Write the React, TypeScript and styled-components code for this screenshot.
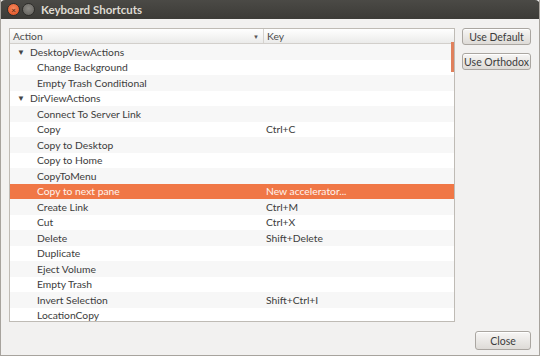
import React from "react";
import styled, { createGlobalStyle } from "styled-components";

const Global = createGlobalStyle`
  html, body { margin: 0; padding: 0; background: #f2f1f0; }
  body { font-family: Lato, "Open Sans", sans-serif; }
`;

const Window = styled.div`
  width: 540px;
  height: 356px;
  box-sizing: border-box;
  display: flex;
  flex-direction: column;
  background: #f2f1f0;
  border-left: 1px solid #a7a39d;
  border-right: 1px solid #a7a39d;
  border-bottom: 1px solid #a7a39d;
  overflow: hidden;
`;

const TitleBar = styled.div`
  height: 19px;
  flex: none;
  display: flex;
  align-items: center;
  padding-left: 7px;
  gap: 2px;
  background: linear-gradient(#4b4a46, #3c3b37);
  border-radius: 5px 5px 0 0;
  margin: 0 -1px;
`;

const WinBtn = styled.div<{ $close?: boolean }>`
  width: 11px;
  height: 11px;
  border-radius: 50%;
  background: ${(p) =>
    p.$close
      ? "radial-gradient(circle at 50% 40%, #f58a5f, #de4a1c)"
      : "radial-gradient(circle at 50% 40%, #8c8a85, #5e5c57)"};
  border: 1px solid #2e2d2a;
  display: flex;
  align-items: center;
  justify-content: center;
  font-size: 8px;
  line-height: 1;
  color: #3a1a0a;
`;

const Title = styled.div`
  margin-left: 4px;
  color: #dfdbd2;
  font-weight: bold;
  font-size: 11.5px;
  font-family: Lato, sans-serif;
`;

const Body = styled.div`
  flex: 1;
  display: flex;
  flex-direction: column;
  padding: 9px 8px 6px 8px;
  min-height: 0;
`;

const Main = styled.div`
  display: flex;
  gap: 7px;
`;

const Tree = styled.div`
  position: relative;
  width: 446px;
  height: 294px;
  box-sizing: border-box;
  border: 1px solid #bfbbb5;
  background: #fff;
  overflow: hidden;
  font-size: 10.3px;
  color: #3c3c3c;
`;

const Header = styled.div`
  display: grid;
  grid-template-columns: 253px 1fr;
  height: 14px;
  background: linear-gradient(#ffffff, #ebebea);
  border-bottom: 1px solid #d2cfcb;
`;

const HeadCell = styled.div<{ $sep?: boolean }>`
  display: flex;
  align-items: center;
  justify-content: space-between;
  padding: 0 4px 0 3px;
  border-left: ${(p) => (p.$sep ? "1px solid #d6d3cf" : "none")};
  color: #4c4c4c;
`;

const Arrow = styled.span`
  font-size: 6px;
  color: #555;
`;

const Row = styled.div<{ $alt?: boolean; $sel?: boolean }>`
  display: grid;
  grid-template-columns: 256px 1fr;
  height: 15.5px;
  align-items: center;
  background: ${(p) => (p.$sel ? "#f07746" : p.$alt ? "#f7f7f7" : "#ffffff")};
  color: ${(p) => (p.$sel ? "#fff4ee" : "#3c3c3c")};
`;

const NameCell = styled.div<{ $level: number }>`
  display: flex;
  align-items: center;
  padding-left: ${(p) => (p.$level === 0 ? 7 : 27)}px;
  white-space: nowrap;
`;

const Expander = styled.span`
  font-size: 8px;
  width: 13px;
  color: #444;
`;

const KeyCell = styled.div`
  white-space: nowrap;
`;

const ScrollThumb = styled.div`
  position: absolute;
  right: 0;
  top: 13px;
  width: 3px;
  height: 30px;
  background: #e0805c;
`;

const Side = styled.div`
  display: flex;
  flex-direction: column;
  gap: 8px;
`;

const Button = styled.button`
  width: 69px;
  height: 17px;
  box-sizing: border-box;
  padding: 0;
  white-space: nowrap;
  font-family: Lato, sans-serif;
  font-size: 10.5px;
  color: #3c3c3c;
  background: linear-gradient(#f7f6f5, #dedbd7);
  border: 1px solid #aaa6a1;
  border-radius: 3px;
  box-shadow: inset 0 1px 0 #fff;
`;

const Footer = styled.div`
  display: flex;
  justify-content: flex-end;
  margin-top: 9px;
`;

const CloseButton = styled(Button)`
  width: 56px;
  height: 19px;
`;

type Item = { name: string; key?: string; level: number; sel?: boolean };

const items: Item[] = [
  { name: "DesktopViewActions", level: 0 },
  { name: "Change Background", level: 1 },
  { name: "Empty Trash Conditional", level: 1 },
  { name: "DirViewActions", level: 0 },
  { name: "Connect To Server Link", level: 1 },
  { name: "Copy", key: "Ctrl+C", level: 1 },
  { name: "Copy to Desktop", level: 1 },
  { name: "Copy to Home", level: 1 },
  { name: "CopyToMenu", level: 1 },
  { name: "Copy to next pane", key: "New accelerator...", level: 1, sel: true },
  { name: "Create Link", key: "Ctrl+M", level: 1 },
  { name: "Cut", key: "Ctrl+X", level: 1 },
  { name: "Delete", key: "Shift+Delete", level: 1 },
  { name: "Duplicate", level: 1 },
  { name: "Eject Volume", level: 1 },
  { name: "Empty Trash", level: 1 },
  { name: "Invert Selection", key: "Shift+Ctrl+I", level: 1 },
  { name: "LocationCopy", level: 1 },
];

export default function App() {
  return (
    <>
      <Global />
      <Window>
        <TitleBar>
          <WinBtn $close>×</WinBtn>
          <WinBtn />
          <Title>Keyboard Shortcuts</Title>
        </TitleBar>
        <Body>
          <Main>
            <Tree>
              <Header>
                <HeadCell>
                  <span>Action</span>
                  <Arrow>▼</Arrow>
                </HeadCell>
                <HeadCell $sep>Key</HeadCell>
              </Header>
              {items.map((it, i) => (
                <Row key={i} $alt={i % 2 === 0} $sel={it.sel}>
                  <NameCell $level={it.level}>
                    {it.level === 0 && <Expander>▼</Expander>}
                    {it.name}
                  </NameCell>
                  <KeyCell>{it.key ?? ""}</KeyCell>
                </Row>
              ))}
              <ScrollThumb />
            </Tree>
            <Side>
              <Button>Use Default</Button>
              <Button>Use Orthodox</Button>
            </Side>
          </Main>
          <Footer>
            <CloseButton>Close</CloseButton>
          </Footer>
        </Body>
      </Window>
    </>
  );
}
